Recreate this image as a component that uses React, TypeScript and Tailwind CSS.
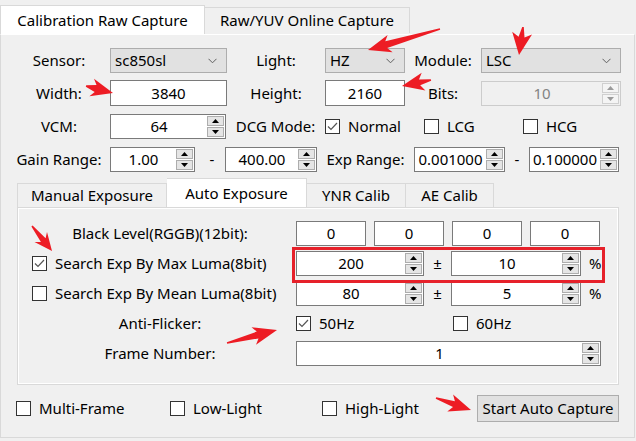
import React from "react";

type Pt = [number, number];

const arrowPoints = (x1: number, y1: number, x2: number, y2: number, head: number, hw: number, sw: number) => {
  const dx = x2 - x1;
  const dy = y2 - y1;
  const len = Math.hypot(dx, dy);
  const ux = dx / len;
  const uy = dy / len;
  const nx = -uy;
  const ny = ux;
  const bx = x2 - ux * head;
  const by = y2 - uy * head;
  const pts: Pt[] = [
    [x1 + nx * 0.8, y1 + ny * 0.8],
    [bx + ux * 3 + (nx * sw) / 2, by + uy * 3 + (ny * sw) / 2],
    [bx - ux * 1 + (nx * hw) / 2, by - uy * 1 + (ny * hw) / 2],
    [x2, y2],
    [bx - ux * 1 - (nx * hw) / 2, by - uy * 1 - (ny * hw) / 2],
    [bx + ux * 3 - (nx * sw) / 2, by + uy * 3 - (ny * sw) / 2],
    [x1 - nx * 0.8, y1 - ny * 0.8],
  ];
  return pts.map((p) => p.map((v) => v.toFixed(1)).join(",")).join(" ");
};

const arrows = [
  { a: [86, 86, 113, 93], head: 21, hw: 18, sw: 7 },
  { a: [440, 29, 368, 50], head: 22, hw: 18, sw: 7 },
  { a: [523, 27, 519, 55], head: 21, hw: 20, sw: 6 },
  { a: [431, 80, 402, 86], head: 21, hw: 18, sw: 6 },
  { a: [32, 226, 52, 251], head: 17, hw: 16, sw: 6 },
  { a: [227, 343, 277, 330], head: 23, hw: 18, sw: 7 },
  { a: [436, 398, 471, 410], head: 21, hw: 18, sw: 6 },
];

const Check = ({ checked = false }: { checked?: boolean }) => (
  <span className="w-[15px] h-[15px] border border-[#333333] bg-white flex items-center justify-center shrink-0">
    {checked && (
      <svg width="11" height="9" viewBox="0 0 11 9">
        <path d="M1 4.5 L4 7.5 L10 1" stroke="#555555" strokeWidth="1.2" fill="none" />
      </svg>
    )}
  </span>
);

const CheckItem = ({ label, checked, className }: { label: string; checked?: boolean; className?: string }) => (
  <div className={`flex items-center gap-[8px] ${className ?? ""}`}>
    <Check checked={checked} />
    <span className="whitespace-nowrap">{label}</span>
  </div>
);

const Combo = ({ value, className }: { value: string; className: string }) => (
  <div className={`h-[25px] flex items-center justify-between pl-[4px] pr-[9px] bg-[#e1e1e1] border border-[#adadad] ${className}`}>
    <span>{value}</span>
    <svg width="9" height="6" viewBox="0 0 9 6">
      <path d="M0.5 0.8 L4.5 4.8 L8.5 0.8" stroke="#606060" strokeWidth="1" fill="none" />
    </svg>
  </div>
);

const Field = ({ value, className }: { value: string; className: string }) => (
  <div className={`h-[25px] flex items-center justify-center bg-white border border-[#7a7a7a] ${className}`}>
    {value}
  </div>
);

const SpinBtns = ({ disabled }: { disabled?: boolean }) => (
  <div className="flex flex-col gap-[1px] py-[1px] pr-[1px]">
    <div className={`w-[17px] h-[10px] border flex items-center justify-center ${disabled ? "border-[#cfcfcf] bg-[#f4f4f4]" : "border-[#adadad] bg-[#e5e5e5]"}`}>
      <svg width="7" height="4" viewBox="0 0 7 4">
        <path d="M0 4 L3.5 0 L7 4 Z" fill={disabled ? "#9a9a9a" : "#000"} />
      </svg>
    </div>
    <div className={`w-[17px] h-[10px] border flex items-center justify-center ${disabled ? "border-[#cfcfcf] bg-[#f4f4f4]" : "border-[#adadad] bg-[#e5e5e5]"}`}>
      <svg width="7" height="4" viewBox="0 0 7 4">
        <path d="M0 0 L3.5 4 L7 0 Z" fill={disabled ? "#9a9a9a" : "#000"} />
      </svg>
    </div>
  </div>
);

const Spin = ({ value, className, disabled }: { value: string; className: string; disabled?: boolean }) => (
  <div
    className={`h-[25px] flex items-center border ${disabled ? "bg-[#f0f0f0] border-[#cccccc] text-[#838383]" : "bg-white border-[#7a7a7a]"} ${className}`}
  >
    <span className="flex-1 text-center whitespace-nowrap">{value}</span>
    <SpinBtns disabled={disabled} />
  </div>
);

export default function App() {
  return (
    <div
      className="relative w-[636px] h-[441px] overflow-hidden bg-[#f0f0f0] text-black text-[15px] leading-none"
      style={{ fontFamily: '"Noto Sans", "Liberation Sans", sans-serif' }}
    >
      {/* outer tabs */}
      <div className="h-[34px] flex items-end">
        <div className="w-[205px] h-[29px] bg-white border border-b-0 border-[#d9d9d9] flex items-center justify-center">
          Calibration Raw Capture
        </div>
        <div className="w-[205px] h-[26px] mb-[1px] bg-[#f0f0f0] border border-l-0 border-b-0 border-[#d9d9d9] flex items-center justify-center">
          Raw/YUV Online Capture
        </div>
      </div>

      {/* main pane */}
      <div className="w-[635px] h-[404px] border border-[#d9d9d9] border-t-white bg-[#f0f0f0]">
        <div className="flex items-center h-[25px] mt-[13px]">
          <div className="w-[109px] pl-[7px] text-center">Sensor:</div>
          <Combo value="sc850sl" className="w-[117px]" />
          <div className="w-[98px] text-center">Light:</div>
          <Combo value="HZ" className="w-[80px]" />
          <div className="w-[76px] text-center">Module:</div>
          <Combo value="LSC" className="w-[140px]" />
        </div>

        <div className="flex items-center h-[26px] mt-[7px]">
          <div className="w-[109px] pl-[7px] text-center">Width:</div>
          <Field value="3840" className="w-[117px] h-[26px]" />
          <div className="w-[98px] text-center">Height:</div>
          <Field value="2160" className="w-[80px] h-[26px]" />
          <div className="w-[76px] text-center">Bits:</div>
          <Spin value="10" disabled className="w-[140px]" />
        </div>

        <div className="flex items-center h-[25px] mt-[8px]">
          <div className="w-[109px] pl-[7px] text-center">VCM:</div>
          <Spin value="64" className="w-[116px]" />
          <div className="w-[99px] text-center">DCG Mode:</div>
          <CheckItem label="Normal" checked className="w-[99px]" />
          <CheckItem label="LCG" className="w-[99px]" />
          <CheckItem label="HCG" />
        </div>

        <div className="flex items-center h-[25px] mt-[8px]">
          <div className="w-[109px] pl-[7px] text-center whitespace-nowrap">Gain Range:</div>
          <Spin value="1.00" className="w-[85px]" />
          <div className="w-[30px] text-center pl-[4px]">-</div>
          <Spin value="400.00" className="w-[92px]" />
          <div className="w-[97px] text-center whitespace-nowrap">Exp Range:</div>
          <Spin value="0.001000" className="w-[91px]" />
          <div className="w-[24px] text-center">-</div>
          <Spin value="0.100000" className="w-[90px]" />
        </div>

        {/* sub tabs */}
        <div className="ml-[16px] mt-[6px] h-[29px] flex items-end">
          <div className="w-[150px] h-[24px] border border-b-0 border-[#d9d9d9] flex items-center justify-center">
            Manual Exposure
          </div>
          <div className="w-[140px] h-[29px] bg-white border border-b-0 border-l-0 border-[#d9d9d9] flex items-center justify-center">
            Auto Exposure
          </div>
          <div className="w-[99px] h-[24px] border border-b-0 border-l-0 border-[#d9d9d9] flex items-center justify-center">
            YNR Calib
          </div>
          <div className="w-[88px] h-[24px] border border-b-0 border-l-0 border-[#d9d9d9] flex items-center justify-center">
            AE Calib
          </div>
        </div>

        <div className="ml-[16px] w-[602px] h-[178px] border border-[#d9d9d9]">
          <div className="h-full border border-white pt-[12px] flex flex-col gap-[5px]">
            <div className="flex items-center h-[25px]">
              <div className="w-[277px] pl-[5px] text-center">Black Level(RGGB)(12bit):</div>
              <Field value="0" className="w-[70px]" />
              <Field value="0" className="w-[70px] ml-[8px]" />
              <Field value="0" className="w-[70px] ml-[8px]" />
              <Field value="0" className="w-[70px] ml-[8px]" />
            </div>

            <div className="flex items-center h-[25px]">
              <div className="w-[277px] pl-[13px]">
                <CheckItem label="Search Exp By Max Luma(8bit)" checked />
              </div>
              <Spin value="200" className="w-[128px]" />
              <div className="w-[27px] text-center">±</div>
              <Spin value="10" className="w-[130px]" />
              <div className="ml-[8px]">%</div>
            </div>

            <div className="flex items-center h-[25px]">
              <div className="w-[277px] pl-[13px]">
                <CheckItem label="Search Exp By Mean Luma(8bit)" />
              </div>
              <Spin value="80" className="w-[128px]" />
              <div className="w-[27px] text-center">±</div>
              <Spin value="5" className="w-[130px]" />
              <div className="ml-[8px]">%</div>
            </div>

            <div className="flex items-center h-[25px]">
              <div className="w-[277px] pl-[5px] text-center">Anti-Flicker:</div>
              <CheckItem label="50Hz" checked className="w-[157px] gap-[7px]" />
              <CheckItem label="60Hz" className="gap-[7px]" />
            </div>

            <div className="flex items-center h-[25px]">
              <div className="w-[277px] pl-[5px] text-center">Frame Number:</div>
              <Spin value="1" className="w-[305px]" />
            </div>
          </div>
        </div>

        <div className="flex items-center h-[27px] mt-[10px] pl-[15px]">
          <CheckItem label="Multi-Frame" className="w-[154px]" />
          <CheckItem label="Low-Light" className="w-[152px]" />
          <CheckItem label="High-Light" className="w-[155px]" />
          <button className="w-[142px] h-[27px] bg-[#e1e1e1] border border-[#adadad] flex items-center justify-center whitespace-nowrap">
            Start Auto Capture
          </button>
        </div>
      </div>

      {/* annotation overlay */}
      <svg className="absolute inset-0 pointer-events-none" width="636" height="441">
        <rect x="293.5" y="248.5" width="310" height="33" fill="none" stroke="#e6212a" strokeWidth="3" />
        {arrows.map((r, i) => (
          <polygon
            key={i}
            points={arrowPoints(r.a[0], r.a[1], r.a[2], r.a[3], r.head, r.hw, r.sw)}
            fill="#ed1c24"
          />
        ))}
      </svg>
    </div>
  );
}
